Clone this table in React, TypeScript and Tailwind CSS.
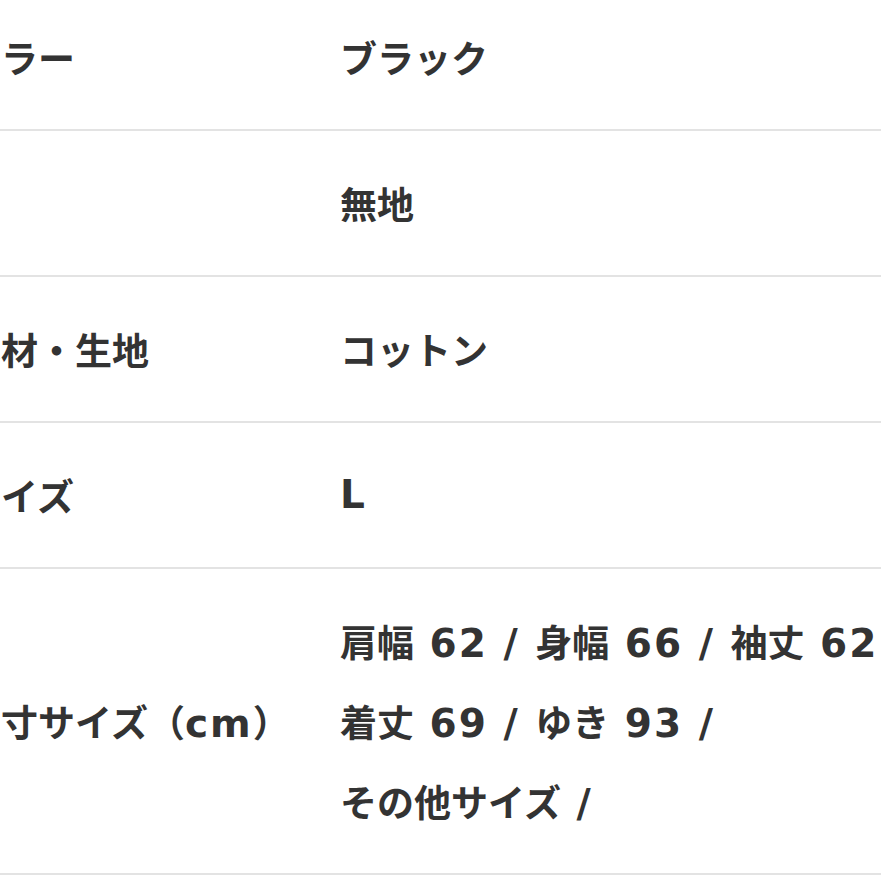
const ROWS: { label: string; value: string[] }[] = [
  { label: 'カラー', value: ['ブラック'] },
  { label: '柄', value: ['無地'] },
  { label: '素材・生地', value: ['コットン'] },
  { label: 'サイズ', value: ['L'] },
  {
    label: '実寸サイズ（cm）',
    value: ['肩幅 62 / 身幅 66 / 袖丈 62 /', '着丈 69 / ゆき 93 /', 'その他サイズ /'],
  },
]

const CJK = /[\u3000-\u30ff\u4e00-\u9fff\uff00-\uffef]/

// 和文と欧文で書体を分ける
function Mixed({ text }: { text: string }) {
  const runs: { cjk: boolean; s: string }[] = []
  for (const ch of text) {
    const cjk = CJK.test(ch)
    const last = runs[runs.length - 1]
    if (last && last.cjk === cjk) last.s += ch
    else runs.push({ cjk, s: ch })
  }
  return (
    <>
      {runs.map((r, i) =>
        r.cjk ? (
          <span key={i} className="text-[37px] font-bold [font-family:'Noto_Sans_CJK_JP',sans-serif]">
            {r.s}
          </span>
        ) : (
          <span key={i} className="text-[39px] font-bold tracking-[2px] [font-family:'DejaVu_Sans','Noto_Sans_CJK_JP',sans-serif]">
            {r.s}
          </span>
        )
      )}
    </>
  )
}

export default function App() {
  return (
    <div className="w-[881px] h-[881px] overflow-hidden bg-white text-[#333]">
      <div className="-ml-[36px] -mt-[15px]">
        {ROWS.map(row => (
          <div key={row.label} className="flex items-center border-b-2 border-[#e3e3e3] py-[32px] leading-[80px] whitespace-nowrap">
            <div className="w-[376px] h-[80px] shrink-0">
              <Mixed text={row.label} />
            </div>
            <div className="flex flex-col">
              {row.value.map(v => (
                <div key={v} className="h-[80px]">
                  <Mixed text={v} />
                </div>
              ))}
            </div>
          </div>
        ))}
      </div>
    </div>
  )
}
